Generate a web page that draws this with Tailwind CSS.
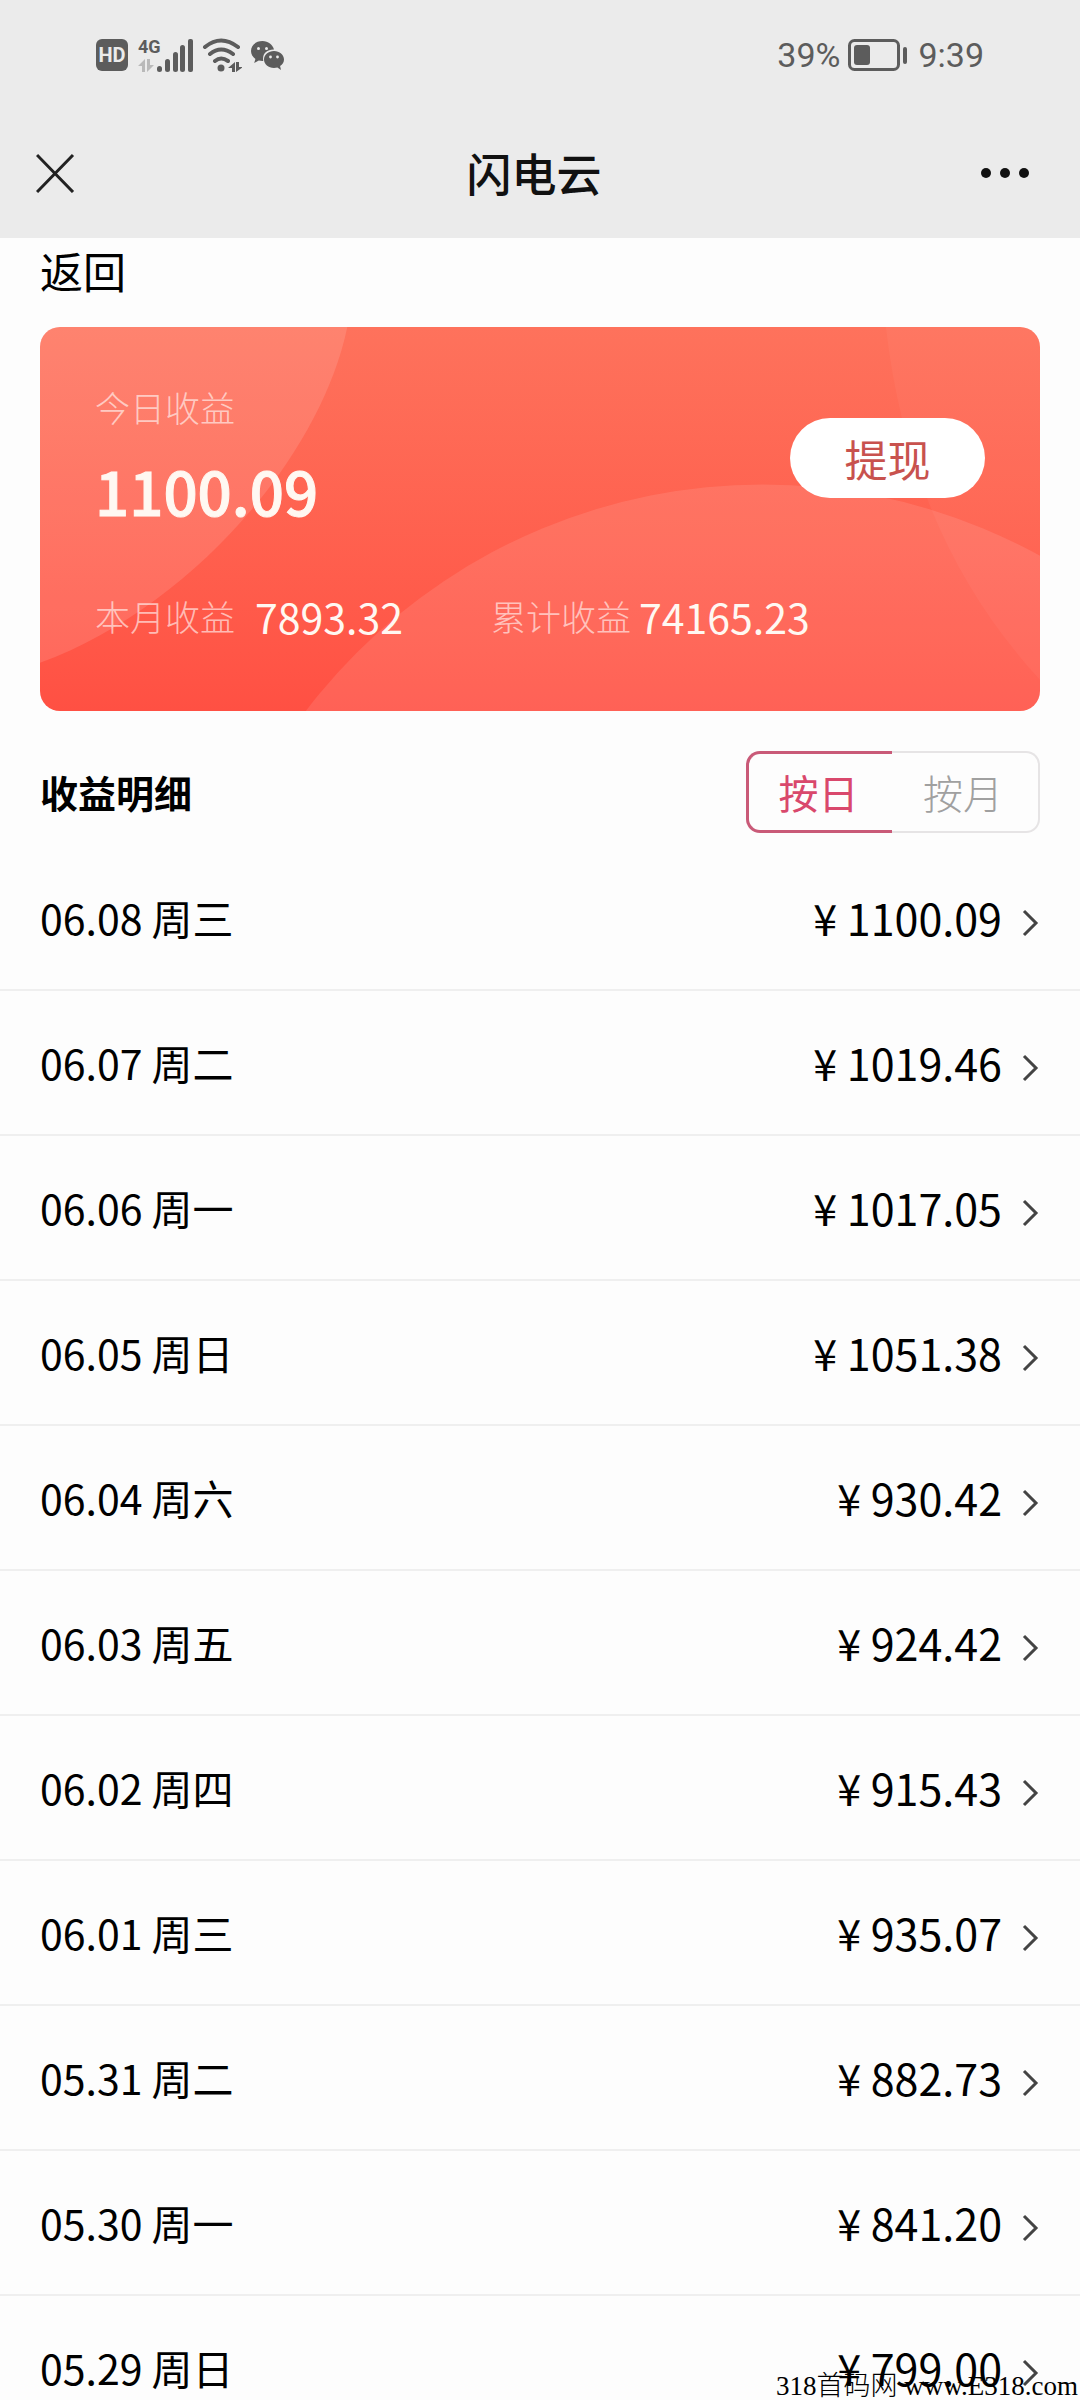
<!DOCTYPE html>
<html lang="zh-CN">
<head>
<meta charset="utf-8">
<meta name="viewport" content="width=device-width, initial-scale=1">
<title>闪电云</title>
<script src="https://cdn.jsdelivr.net/npm/@tailwindcss/browser@4"></script>
</head>
<body class="bg-[#fdfdfd] font-['Noto_Sans_CJK_SC',sans-serif] text-black">
<div class="relative flex h-screen flex-col overflow-hidden">
  <header class="shrink-0 bg-[#ebebeb]">
    <!-- status bar -->
    <div class="flex h-[110px] items-center justify-between pr-24 pl-24 font-[Roboto,sans-serif] text-[#5c5c5c]">
      <div class="flex items-center">
        <span class="flex h-8 w-8 items-center justify-center rounded-md bg-[#5c5c5c] text-xl font-bold text-[#ebebeb]">HD</span>
        <svg class="ml-2.5 h-9 w-14" viewBox="0 0 56 36" fill="currentColor" aria-label="4G">
          <text x="0" y="16" font-size="18" font-weight="700" font-family="Roboto, sans-serif">4G</text>
          <g fill="#b9b9b9"><path d="M7 22v13H4v-6H0z"/><path d="M9 35V22h3v6h4z"/></g>
          <rect x="19" y="29" width="5" height="6" rx="2.5"/><rect x="27" y="22" width="5" height="13" rx="2.5"/><rect x="35" y="15" width="5" height="20" rx="2.5"/><rect x="42" y="8" width="5" height="27" rx="2.5"/><rect x="50" y="2" width="5" height="33" rx="2"/>
        </svg>
        <svg class="ml-2 h-9 w-10" viewBox="0 0 40 36" fill="none" stroke="currentColor" stroke-width="4" stroke-linecap="round" aria-label="Wi-Fi">
          <path d="M3 10Q19-3 36 10M8 17Q19 8 31 17M13 24Q19 19 26 24"/>
          <circle cx="19" cy="31" r="3.5" fill="currentColor" stroke="none"/>
          <g fill="currentColor" stroke="none"><path d="M33 25v10h-3v-4h-4z"/><path d="M34 35V25h3v5h4z"/></g>
        </svg>
        <svg class="ml-2 h-9 w-9" viewBox="0 0 36 36" fill="currentColor" aria-label="微信">
          <path d="M12.500 4C5.600 4 1 8.600 1 14c0 3.300 1.700 6.100 4.400 7.900L4.200 26l4.600-2.400c1.200.3 2.400.5 3.700.5h.8C11.800 17 17 12.300 24 12.600 22.800 7.600 18.200 4 12.500 4z"/>
          <path d="M24 14c-5.600 0-10 3.700-10 8.500S18.400 31 24 31c1.200 0 2.300-.2 3.400-.5L31 33l-.9-3.900c2.400-1.600 3.900-3.900 3.900-6.600C34 17.700 29.600 14 24 14z"/>
          <g fill="#ebebeb"><circle cx="8.500" cy="11.500" r="1.500"/><circle cx="16.500" cy="11.500" r="1.500"/><circle cx="20.500" cy="20" r="1.400"/><circle cx="27.500" cy="20" r="1.400"/></g>
        </svg>
      </div>
      <div class="flex items-center text-[34px] leading-10">
        <span>39%</span>
        <svg class="mr-2.5 ml-2 h-8 w-[60px]" viewBox="0 0 60 32" aria-label="电量">
          <rect x="1.500" y="1.500" width="49" height="29" rx="5" fill="none" stroke="currentColor" stroke-width="3"/>
          <rect x="6" y="6" width="16" height="20" rx="3" fill="currentColor"/><rect x="55" y="8" width="4" height="17" rx="2" fill="currentColor"/>
        </svg>
        <span>9:39</span>
      </div>
    </div>
    <!-- title bar -->
    <div class="grid h-32 grid-cols-[1fr_auto_1fr] items-center pr-12 pb-0.5 pl-9">
      <button type="button" aria-label="关闭" class="justify-self-start text-[#222]">
        <svg class="h-10 w-10" viewBox="0 0 40 40" fill="none" stroke="currentColor" stroke-width="3"><path d="M1 2l36 37M37 2L1 39"/></svg>
      </button>
      <h1 class="text-[45px] leading-[60px] font-medium text-[#111]">闪电云</h1>
      <button type="button" aria-label="更多" class="justify-self-end text-[#111]">
        <svg class="h-10 w-[52px]" viewBox="0 0 52 40" fill="currentColor"><circle cx="6" cy="20" r="5"/><circle cx="25" cy="20" r="5"/><circle cx="44" cy="20" r="5"/></svg>
      </button>
    </div>
  </header>

  <main>
    <a href="#" class="mx-10 block w-fit pt-0.5 text-[43px] leading-[60px]">返回</a>

    <section class="relative mx-10 mt-[27px] overflow-hidden rounded-[20px] bg-linear-to-b from-[#fe725c] to-[#ff5043] px-[55px] pt-[54px] pb-[67px] text-[#fff8f2]">
      <svg class="absolute inset-0 h-full w-full" viewBox="0 0 999 383" preserveAspectRatio="none" fill="#fff" aria-hidden="true">
        <path fill-opacity=".12" d="M0 0H307C280 130 150 280 0 335Z"/>
        <circle fill-opacity=".1" cx="722" cy="731" r="574"/>
        <path fill-opacity=".04" d="M845 0C860 130 905 250 999 352V0Z"/>
      </svg>
      <div class="relative flex items-center justify-between">
        <div>
          <h2 class="text-[35px] leading-[52px] font-light text-white/60">今日收益</h2>
          <p class="mt-3 text-[60px] leading-[90px] font-medium [-webkit-text-stroke:1px_currentColor]">1100.09</p>
        </div>
        <button type="button" class="h-20 w-[195px] rounded-full bg-white text-[43px] text-[#c8524e]">提现</button>
      </div>
      <dl class="relative mt-[53px] flex items-center text-[41px] leading-[56px]">
        <dt class="text-[35px] font-light text-white/60">本月收益</dt>
        <dd class="ml-5">7893.32</dd>
        <dt class="ml-[88px] text-[35px] font-light text-white/60">累计收益</dt>
        <dd class="ml-2">74165.23</dd>
      </dl>
    </section>

    <div class="mx-10 mt-10 flex items-center justify-between">
      <h2 class="text-[38px] leading-[54px] font-bold">收益明细</h2>
      <div class="flex h-[82px] text-[40px]">
        <button type="button" aria-pressed="true" class="w-[146px] rounded-l-[14px] border-[3px] border-r-0 border-[#c95a78] pr-1 text-[#d9486c]">按日</button>
        <button type="button" aria-pressed="false" class="w-[148px] rounded-r-[14px] border-2 border-l-0 border-[#e6e4e5] pr-1 font-light text-[#a0a0a0]">按月</button>
      </div>
    </div>

    <ul id="list" class="mt-[13px]"></ul>
  </main>

  <p class="absolute right-0.5 bottom-0 font-['Liberation_Serif','Noto_Sans_CJK_SC',serif] text-[27px] leading-7 font-light whitespace-nowrap">318首码网 www.E318.com</p>
</div>
<script>
  const days = [
    ['06.08 周三', '1100.09'], ['06.07 周二', '1019.46'], ['06.06 周一', '1017.05'],
    ['06.05 周日', '1051.38'], ['06.04 周六', '930.42'], ['06.03 周五', '924.42'],
    ['06.02 周四', '915.43'], ['06.01 周三', '935.07'], ['05.31 周二', '882.73'],
    ['05.30 周一', '841.20'], ['05.29 周日', '799.00']
  ];
  document.getElementById('list').innerHTML = days.map(([day, sum]) => `
    <li class="border-b-2 border-[#efefef]">
      <a href="#" class="flex h-[143px] items-center px-10 pb-0.5 leading-[60px]">
        <span class="text-[41px]">${day}</span>
        <span class="ml-auto text-[43px]">¥ ${sum}</span>
        <svg class="mt-3 mr-px ml-5 h-7 w-[17px] text-[#444]" viewBox="0 0 17 28" fill="none" stroke="currentColor" stroke-width="3"><path d="M2 2l12 12L2 26"/></svg>
      </a>
    </li>`).join('');
</script>
</body>
</html>
